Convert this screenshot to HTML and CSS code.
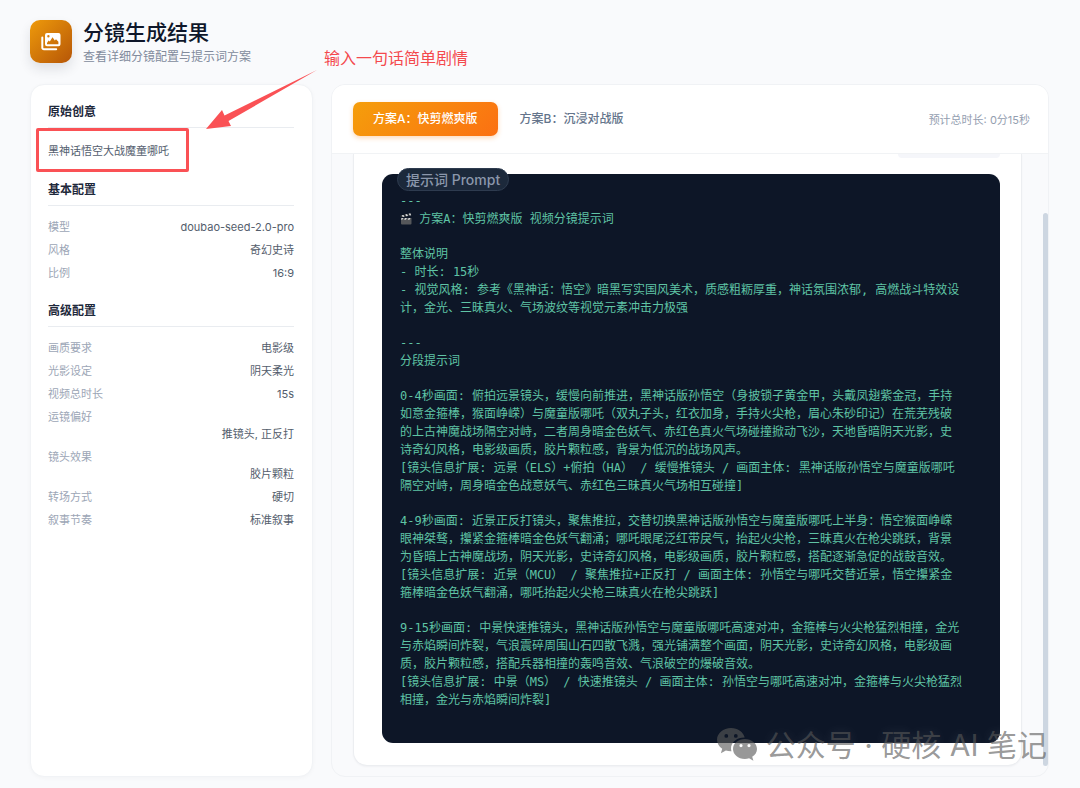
FILE: index.html
```html
<!DOCTYPE html>
<html lang="zh-CN">
<head>
<meta charset="utf-8">
<meta name="viewport" content="width=device-width, initial-scale=1">
<title>分镜生成结果</title>
<link rel="stylesheet" href="styles.css">
</head>
<body>
<div class="page">
  <header class="page-header">
    <div class="logo">
      <svg viewBox="0 0 20 18" width="20" height="18" aria-hidden="true">
        <path class="logo-stroke" d="M1.3 4.5v10.2a1.6 1.6 0 0 0 1.6 1.6h12.3"/>
        <path class="logo-fill" fill-rule="evenodd" d="M6 0h11.5a2 2 0 0 1 2 2v9.3a2 2 0 0 1-2 2H6a2 2 0 0 1-2-2V2a2 2 0 0 1 2-2zm1.400 2a1.200 1.200 0 1 0 0 2.400 1.200 1.200 0 0 0 0-2.400zM6 11.200h11.400V8.800L15 6.200l-1.200 1.300-2.300-3.300L8.800 8.600 7.600 7.600 6 10z"/>
      </svg>
    </div>
    <div class="titles">
      <h1>分镜生成结果</h1>
      <p>查看详细分镜配置与提示词方案</p>
    </div>
  </header>

  <div class="layout">
    <aside class="sidebar">
      <section>
        <h2>原始创意</h2>
        <p class="idea">黑神话悟空大战魔童哪吒</p>
      </section>
      <section>
        <h2>基本配置</h2>
        <dl>
          <div><dt>模型</dt><dd>doubao-seed-2.0-pro</dd></div>
          <div><dt>风格</dt><dd>奇幻史诗</dd></div>
          <div><dt>比例</dt><dd>16:9</dd></div>
        </dl>
      </section>
      <section>
        <h2>高级配置</h2>
        <dl>
          <div><dt>画质要求</dt><dd>电影级</dd></div>
          <div><dt>光影设定</dt><dd>阴天柔光</dd></div>
          <div><dt>视频总时长</dt><dd>15s</dd></div>
          <div><dt>运镜偏好</dt><dd class="full">推镜头, 正反打</dd></div>
          <div><dt>镜头效果</dt><dd class="full">胶片颗粒</dd></div>
          <div><dt>转场方式</dt><dd>硬切</dd></div>
          <div><dt>叙事节奏</dt><dd>标准叙事</dd></div>
        </dl>
      </section>
    </aside>

    <main class="result">
      <div class="result-bar">
        <div class="tabs">
          <button class="tab active" type="button">方案A：快剪燃爽版</button>
          <button class="tab" type="button">方案B：沉浸对战版</button>
        </div>
        <span class="duration">预计总时长: 0分15秒</span>
      </div>
      <div class="result-body">
        <article class="card">
          <div class="card-chip"></div>
          <div class="prompt">
            <span class="prompt-label">提示词 Prompt</span>
<p>---
<svg class="clapper" viewBox="0 0 12 12" width="12" height="12" aria-hidden="true"><path fill="#55575a" d="M1 5h10.5v5.5a1 1 0 0 1-1 1H2a1 1 0 0 1-1-1z"/><path fill="#303438" d="M.3 2.6 10.8.2l.5 2L.8 4.6z"/><path fill="#d9dadb" d="m1.7 2.3 1.8-.4 1 1.8-1.8.4zM5.2 1.5 7 1.1l1 1.8-1.8.4zM8.7.7l1.6-.4.9 1.9-1.5.3zM1.5 5h1.8l-1 1.8H1.2zM5.1 5h1.8l-1 1.8H4.1zM8.7 5h1.8l-1 1.8H7.7z"/></svg> 方案A：快剪燃爽版 视频分镜提示词</p>
<p>整体说明
- 时长: 15秒
- 视觉风格: 参考《黑神话：悟空》暗黑写实国风美术，质感粗粝厚重，神话氛围浓郁, 高燃战斗特效设
计，金光、三昧真火、气场波纹等视觉元素冲击力极强</p>
<p>---
分段提示词</p>
<p>0-4秒画面: 俯拍远景镜头，缓慢向前推进，黑神话版孙悟空（身披锁子黄金甲，头戴凤翅紫金冠，手持
如意金箍棒，猴面峥嵘）与魔童版哪吒（双丸子头，红衣加身，手持火尖枪，眉心朱砂印记）在荒芜残破
的上古神魔战场隔空对峙，二者周身暗金色妖气、赤红色真火气场碰撞掀动飞沙，天地昏暗阴天光影，史
诗奇幻风格，电影级画质，胶片颗粒感，背景为低沉的战场风声。
[镜头信息扩展: 远景（ELS）+俯拍（HA） / 缓慢推镜头 / 画面主体: 黑神话版孙悟空与魔童版哪吒
隔空对峙，周身暗金色战意妖气、赤红色三昧真火气场相互碰撞]</p>
<p>4-9秒画面: 近景正反打镜头，聚焦推拉，交替切换黑神话版孙悟空与魔童版哪吒上半身：悟空猴面峥嵘
眼神桀骜，攥紧金箍棒暗金色妖气翻涌；哪吒眼尾泛红带戾气，抬起火尖枪，三昧真火在枪尖跳跃，背景
为昏暗上古神魔战场，阴天光影，史诗奇幻风格，电影级画质，胶片颗粒感，搭配逐渐急促的战鼓音效。
[镜头信息扩展: 近景（MCU） / 聚焦推拉+正反打 / 画面主体: 孙悟空与哪吒交替近景，悟空攥紧金
箍棒暗金色妖气翻涌，哪吒抬起火尖枪三昧真火在枪尖跳跃]</p>
<p>9-15秒画面: 中景快速推镜头，黑神话版孙悟空与魔童版哪吒高速对冲，金箍棒与火尖枪猛烈相撞，金光
与赤焰瞬间炸裂，气浪震碎周围山石四散飞溅，强光铺满整个画面，阴天光影，史诗奇幻风格，电影级画
质，胶片颗粒感，搭配兵器相撞的轰鸣音效、气浪破空的爆破音效。
[镜头信息扩展: 中景（MS） / 快速推镜头 / 画面主体: 孙悟空与哪吒高速对冲，金箍棒与火尖枪猛烈
相撞，金光与赤焰瞬间炸裂]</p>
          </div>
        </article>
        <div class="scroll-thumb"></div>
      </div>
    </main>
  </div>

  <div class="note">输入一句话简单剧情</div>
  <svg class="note-arrow" viewBox="0 0 112 62" width="112" height="62" aria-hidden="true"><path d="M111 1 18.500 46.500 16 41 0 60l25-3-2.500-5z"/></svg>
  <div class="note-frame"></div>

  <div class="watermark">
    <svg viewBox="0 0 40 34" width="40" height="34" aria-hidden="true">
      <path fill-rule="evenodd" d="M14 0C6.3 0 0 5.2 0 11.7c0 3.6 2 6.800 5.200 9l-1.300 4.600 5-2.700c1.800.5 3.600.8 5.600.7A10.500 10.500 0 0 1 14 20.500C14 14.400 20 9.500 27.700 9.600 26.300 4 20.700 0 14 0zM9.300 6a1.900 1.900 0 1 1 0 3.800 1.900 1.900 0 0 1 0-3.800zm9.500 0a1.900 1.900 0 1 1 0 3.800 1.900 1.900 0 0 1 0-3.800z"/>
      <path fill-rule="evenodd" d="M27.800 11C21.200 11 16 15.400 16 20.900s5.200 10 11.800 10c1.500 0 3-.2 4.300-.7l4.300 2.500-1.200-3.900c3-1.900 4.800-4.700 4.800-7.900 0-5.500-5.500-9.900-12.200-9.900zM24 16a1.600 1.600 0 1 1 0 3.200 1.600 1.600 0 0 1 0-3.200zm8 0a1.600 1.600 0 1 1 0 3.200 1.600 1.600 0 0 1 0-3.200z"/>
    </svg>
    <span>公众号 · 硬核 AI 笔记</span>
  </div>
</div>
</body>
</html>
```
FILE: styles.css
```css
* { box-sizing: border-box; }

body {
  margin: 0;
  background: #f9fafc;
  color: #1e293b;
  font-family: Inter, "Noto Sans CJK SC", sans-serif;
}

h1, h2, p, dl, dd { margin: 0; }

.page {
  position: relative;
  display: flex;
  flex-direction: column;
  min-height: 100vh;
  padding: 20px 31px 12px 30px;
}

.page-header {
  display: flex;
  align-items: flex-start;
  gap: 11px;
  height: 64px;
}

.logo {
  display: grid;
  place-items: center;
  width: 42px;
  height: 43px;
  border-radius: 10px;
  background: linear-gradient(135deg, #ee9a0b, #b65607);
  box-shadow: 0 6px 12px rgba(30, 41, 59, 0.12);
}

.logo-stroke { fill: none; stroke: #fff; stroke-width: 2; stroke-linecap: round; }
.logo-fill { fill: #fff; }

h1 { font-size: 21px; line-height: 26px; font-weight: 500; color: #0f172a; }
.titles p { font-size: 12px; line-height: 21px; color: #828b9c; }

.layout { display: flex; flex: 1; gap: 18px; }

.sidebar {
  flex: none;
  width: 283px;
  padding: 18px 18px 20px 17px;
  border: 1px solid #f1f3f6;
  border-radius: 14px;
  background: #fff;
  box-shadow: 0 1px 4px rgba(15, 23, 42, 0.03);
}

.sidebar section + section { margin-top: 20px; }

h2 {
  margin-bottom: 13px;
  padding-bottom: 6px;
  border-bottom: 1px solid #e9ecf0;
  font-size: 12px;
  line-height: 18px;
  font-weight: 600;
}

.idea { font-size: 11px; line-height: 20px; color: #545e6e; }

dl { display: flex; flex-direction: column; gap: 6px; font-size: 11px; line-height: 17px; }
dl div { display: flex; flex-wrap: wrap; justify-content: space-between; }
dt { color: #9ca6b6; }
dd { color: #535d6c; text-align: right; }
dd.full { width: 100%; }

.result {
  display: flex;
  flex: 1;
  flex-direction: column;
  min-width: 0;
  overflow: hidden;
  border: 1px solid #f0f2f5;
  border-radius: 14px;
  background: #f9fafc;
}

.result-bar {
  display: flex;
  flex: none;
  align-items: center;
  justify-content: space-between;
  height: 69px;
  padding: 0 18px 0 21px;
  border-bottom: 1px solid #f1f3f5;
  background: #fff;
}

.tabs { display: flex; gap: 2px; }

.tab {
  height: 34px;
  padding: 0 20px;
  border: 0;
  border-radius: 7px;
  background: none;
  color: #64748b;
  font: 500 12px/18px Inter, "Noto Sans CJK SC", sans-serif;
}

.tab.active {
  background: linear-gradient(135deg, #f59e0b, #fb7012);
  box-shadow: 0 2px 5px rgba(249, 130, 22, 0.3);
  color: #fff;
}

.duration { font-size: 11px; color: #949eb0; }

.result-body {
  position: relative;
  display: flex;
  flex: 1;
  padding: 0 26px 10px 21px;
}

.card {
  display: flex;
  flex: 1;
  flex-direction: column;
  min-width: 0;
  padding: 0 21px 22px 28px;
  border: 1px solid #eceef1;
  border-top: 0;
  border-radius: 0 0 14px 14px;
  background: #fff;
  box-shadow: 0 1px 2px rgba(15, 23, 42, 0.04);
}

.card-chip {
  align-self: flex-end;
  width: 102px;
  height: 4px;
  margin-bottom: 16px;
  border-radius: 0 0 7px 7px;
  background: #f5f6fa;
}

.prompt {
  position: relative;
  display: flex;
  flex: 1;
  flex-direction: column;
  gap: 17px;
  padding: 18px 18px 34px;
  border-radius: 11px;
  background: #0d1627;
  color: #5fc4a5;
  font: 12px/18px "DejaVu Sans Mono", "Noto Sans CJK SC", monospace;
  white-space: pre;
}

.prompt-label {
  position: absolute;
  top: -6px;
  left: 15px;
  padding: 0 8px;
  border: 1px solid #2e3b4f;
  border-radius: 12px;
  background: #1c293b;
  color: #8b97ab;
  font: 500 14px/21px Inter, "Noto Sans CJK SC", sans-serif;
}

.clapper { vertical-align: -2px; }

.scroll-thumb {
  position: absolute;
  top: 59px;
  right: 0;
  bottom: 10px;
  width: 5px;
  border-radius: 3px;
  background: #cdd6e1;
}

.note {
  position: absolute;
  top: 46px;
  left: 324px;
  color: #f4494d;
  font-size: 16px;
  line-height: 24px;
}

.note-arrow { position: absolute; top: 69px; left: 206px; fill: #fa5155; }

.note-frame {
  position: absolute;
  top: 128px;
  left: 36px;
  width: 153px;
  height: 44px;
  border: 3px solid #fa5155;
  border-radius: 2px;
}

.watermark {
  position: absolute;
  right: 33px;
  bottom: 24px;
  display: flex;
  align-items: center;
  gap: 9px;
  color: rgba(88, 88, 88, 0.62);
  font: 400 30px/40px Inter, "Noto Sans CJK SC", sans-serif;
  text-shadow: 0 0 12px rgba(255, 255, 255, 0.12);
  white-space: nowrap;
}

.watermark svg { fill: currentColor; }
```
